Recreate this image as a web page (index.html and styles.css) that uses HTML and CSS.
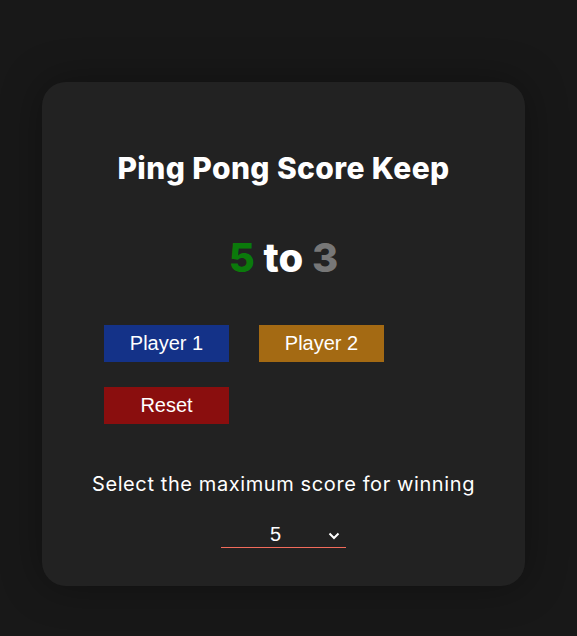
FILE: index.html
```html
<!DOCTYPE html>
<html>
<head>
<meta charset="utf-8">
<link rel="stylesheet" href="styles.css">
</head>
<body>
<div class="card">
  <h1 class="title">Ping Pong Score Keep</h1>
  <h2 class="score"><span class="p1">5</span> to <span class="p2">3</span></h2>
  <div class="buttons">
    <button class="btn btn-blue">Player 1</button>
    <button class="btn btn-orange">Player 2</button>
    <button class="btn btn-red">Reset</button>
  </div>
  <p class="label">Select the maximum score for winning</p>
  <div class="select-wrap">
    <select class="select">
      <option>5</option>
    </select>
    <svg class="chev" width="12" height="8" viewBox="0 0 12 8"><path d="M1.5 1.5 L6 6 L10.5 1.5" fill="none" stroke="#fff" stroke-width="2"/></svg>
  </div>
</div>
</body>
</html>
```
FILE: styles.css
```css
html, body { margin: 0; padding: 0; }
body {
  background: #181818;
  width: 577px;
  height: 636px;
  overflow: hidden;
  font-family: Inter, "Noto Sans", sans-serif;
}
.card {
  margin: 82px 0 0 42px;
  width: 483px;
  height: 504px;
  box-sizing: border-box;
  background: #222222;
  border-radius: 24px;
  box-shadow: 0 0 40px rgba(0,0,0,0.35);
  padding: 0;
  color: #fff;
}
.title {
  margin: 0;
  padding-top: 66px;
  font-size: 30px;
  font-weight: 800;
  letter-spacing: 0.4px;
  text-align: center;
  line-height: 40px;
}
.score {
  margin: 46px 0 0;
  font-size: 40px;
  font-weight: 800;
  text-align: center;
  line-height: 48px;
}
.p1 { color: #0b7a0b; }
.p2 { color: #777777; }
.buttons {
  display: grid;
  grid-template-columns: 125px 125px;
  column-gap: 30px;
  row-gap: 25px;
  margin: 43px 0 0 62px;
}
.btn {
  height: 37px;
  border: none;
  color: #fff;
  font-family: "Liberation Sans", Arial, sans-serif;
  font-size: 20px;
  padding: 0;
}
.btn-blue { background: #143288; }
.btn-orange { background: #a46a13; }
.btn-red { background: #8a0e0e; }
.label {
  margin: 45px 0 0;
  text-align: center;
  font-size: 20px;
  letter-spacing: 0.6px;
  line-height: 30px;
  white-space: nowrap;
}
.select-wrap {
  position: relative;
  width: 125px;
  margin: 21px auto 0;
}
.select {
  appearance: none;
  -webkit-appearance: none;
  width: 125px;
  height: 28px;
  background: transparent;
  border: none;
  border-bottom: 1px solid #f26b5b;
  color: #fff;
  font-family: "Liberation Sans", Arial, sans-serif;
  font-size: 20px;
  text-align: center;
  text-align-last: center;
  padding: 0 16px 0 0;
  display: block;
}
.select option { background: #222; }
.chev {
  position: absolute;
  right: 6px;
  top: 12px;
  pointer-events: none;
}
```
